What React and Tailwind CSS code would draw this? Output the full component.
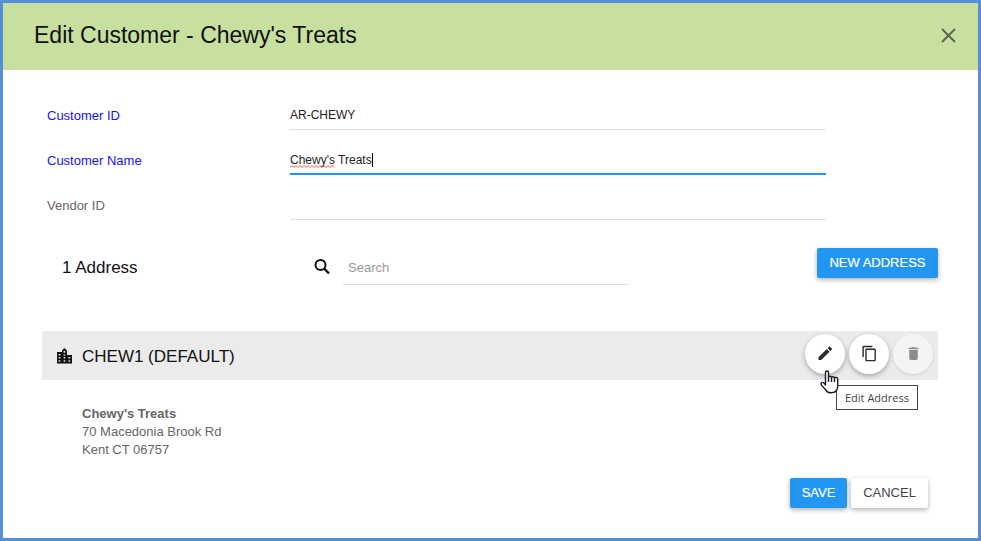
import React from "react";
import { MdContentCopy, MdDelete } from "react-icons/md";

const raised = "shadow-[0_2px_5px_rgba(0,0,0,0.3)]";

function Field({ id, label, value, required, focused }) {
  return (
    <div className="grid h-[45px] grid-cols-[243px_1fr] items-end">
      <label
        htmlFor={id}
        className={`text-[13px] leading-7 ${required ? "text-[#1414ee]" : "text-[#666666]"}`}
      >
        {label}
      </label>
      <div className="relative">
        <input
          id={id}
          type="text"
          defaultValue={value}
          spellCheck={false}
          className={`block h-[30px] w-full bg-transparent text-[12px] text-[#222222] outline-none ${
            focused ? "border-b-2 border-[#2196f3] pt-px" : "border-b border-[#dddddd]"
          }`}
        />
        {focused && (
          <>
            <svg className="absolute top-5 left-0 h-[3px] w-[45px]" viewBox="0 0 45 3" fill="none" aria-hidden="true">
              <path
                d="M0 2.5l2-2 2 2 2-2 2 2 2-2 2 2 2-2 2 2 2-2 2 2 2-2 2 2 2-2 2 2 2-2 2 2 2-2 2 2 2-2 2 2 2-2 2 2"
                stroke="#f04040"
                strokeWidth="0.9"
              />
            </svg>
            <span className="absolute top-2 left-[82px] h-[14px] w-px bg-black" />
          </>
        )}
      </div>
    </div>
  );
}

function RoundButton({ label, disabled, children }) {
  return (
    <button
      type="button"
      aria-label={label}
      disabled={disabled}
      className={`flex size-10 items-center justify-center rounded-full pb-0.5 ${
        disabled ? "bg-[#f4f4f4] text-[#8c8c8c] shadow-[0_1px_3px_rgba(0,0,0,0.12)]" : `bg-white text-[#2b2b2b] ${raised}`
      }`}
    >
      {children}
    </button>
  );
}

export default function App() {
  return (
    <div className="flex min-h-screen flex-col border-3 border-[#568fd6] bg-white font-['Liberation_Sans',Arial,sans-serif]">
      <header className="flex h-[67px] items-center justify-between bg-[#c7df9f] pr-5 pb-0.5 pl-[31px]">
        <h1 className="text-[23px] text-[#111111]">Edit Customer - Chewy's Treats</h1>
        <button type="button" aria-label="Close" className="text-[#5c6250]">
          <svg className="size-5" viewBox="0 0 20 20" fill="none" stroke="currentColor" strokeWidth="1.8" aria-hidden="true">
            <path d="M4 3l13 13M17 3l-13 13" />
          </svg>
        </button>
      </header>

      <main className="pt-[15px] pr-10 pl-[39px]">
        <form onSubmit={(event) => event.preventDefault()}>
          <div className="pr-28 pl-[5px]">
            <Field id="customer-id" label="Customer ID" value="AR-CHEWY" required />
            <Field id="customer-name" label="Customer Name" value="Chewy's Treats" required focused />
            <Field id="vendor-id" label="Vendor ID" value="" />
          </div>

          <div className="mt-7 flex items-center pl-5">
            <h2 className="w-[252px] pt-0.5 text-[17px] text-[#111111]">1 Address</h2>
            <label htmlFor="address-search" aria-label="Search addresses" className="w-[29px]">
              <svg className="size-4" viewBox="0 0 16 16" fill="none" stroke="#111111" strokeWidth="2" aria-hidden="true">
                <circle cx="6.5" cy="6" r="5" />
                <path d="M10.200 9.700l4.800 4.800" strokeWidth="2.400" />
              </svg>
            </label>
            <input
              id="address-search"
              type="text"
              placeholder="Search"
              className="h-[37px] w-[286px] border-b border-[#dddddd] px-[5px] pt-0.5 text-[13px] outline-none placeholder:text-[#999999]"
            />
            <button
              type="button"
              className={`ml-auto h-[30px] w-[121px] self-start rounded-xs bg-[#2196f3] text-[13px] text-white [-webkit-text-stroke:0.2px_white] ${raised}`}
            >
              NEW ADDRESS
            </button>
          </div>

          <section className="mt-[46px]">
            <div className="flex h-[49px] items-center bg-[#ebebeb] pr-[5px] pl-3.5">
              <svg className="size-[18px]" viewBox="0 0 18 18" fill="none" aria-hidden="true">
                <path d="M1 5h5V3.500L8.500 1 11 3.500V8h5v8.500H1z" fill="#111111" />
                <path
                  d="M7.600 4h1.800v1.800H7.600zM2.600 7h1.800v1.400H2.600zM7.600 7.400h1.800v1.400H7.600zM2.600 10h1.800v1.600H2.600zM7.600 10h1.800v1.600H7.600zM12.400 10h1.800v1.600h-1.800zM2.600 13.200h1.800v1.600H2.600zM7.600 13.200h1.800v1.600H7.600zM12.400 13.200h1.800v1.600h-1.800z"
                  fill="#d8d8d8"
                />
              </svg>
              <h3 className="ml-2 pt-0.5 text-[17px] text-[#111111]">CHEW1 (DEFAULT)</h3>
              <div className="ml-auto flex gap-1 pb-[3px]">
                <div className="relative">
                  <RoundButton label="Edit Address">
                    <svg className="size-4" viewBox="0 0 16 16" fill="currentColor" aria-hidden="true">
                      <path d="M1.500 12.300L9.800 4l2.700 2.700-8.300 8.300H1.500zM10.600 3.200l1.500-1.500q.5-.5 1 0l1.700 1.700q.5.500 0 1l-1.500 1.500z" />
                    </svg>
                  </RoundButton>
                  <svg
                    className="absolute top-9 left-[15px] z-10 h-[25px] w-[19px]"
                    viewBox="0 0 19 25"
                    fill="white"
                    stroke="#1c1c24"
                    strokeWidth="1.4"
                    strokeLinejoin="round"
                    aria-hidden="true"
                  >
                    <path d="M5.500 12.500V2.600Q5.500 1 7 1t1.500 1.600V7.500q0-1.200 1.500-1.200t1.500 1.500q0-1 1.500-1t1.500 1.500q0-.900 1.600-.900t1.600 2.200v6.400q0 6.800-6.800 6.800-3.600 0-5.300-3L1.600 15.400q-1.100-2.100.2-2.800t2.400.6l1.300 1.800z" />
                    <path d="M8.500 7.500V12M11.500 7.800V12M14.500 8.300V12" />
                  </svg>
                  <div
                    role="tooltip"
                    className="absolute top-[51px] left-[31px] h-[25px] w-[82px] border border-[#444444] bg-white text-center font-['Open_Sans','Noto_Sans',sans-serif] text-[11px] leading-[23px] whitespace-nowrap text-[#444444]"
                  >
                    Edit Address
                  </div>
                </div>
                <RoundButton label="Copy Address">
                  <MdContentCopy className="size-[17px]" />
                </RoundButton>
                <RoundButton label="Delete Address" disabled>
                  <MdDelete className="size-[17px]" />
                </RoundButton>
              </div>
            </div>
            <address className="mt-[25px] pl-10 text-[13px] leading-[18px] text-[#666666] not-italic">
              <strong className="block">Chewy's Treats</strong>
              70 Macedonia Brook Rd
              <br />
              Kent CT 06757
            </address>
          </section>

          <div className="mt-[19px] flex justify-end gap-1 pr-2.5">
            <button
              type="submit"
              className={`h-[30px] w-[57px] rounded-xs bg-[#2196f3] text-[13px] text-white [-webkit-text-stroke:0.2px_white] ${raised}`}
            >
              SAVE
            </button>
            <button
              type="button"
              className={`h-[30px] w-[77px] rounded-xs bg-white text-[13px] text-[#444444] ${raised}`}
            >
              CANCEL
            </button>
          </div>
        </form>
      </main>
    </div>
  );
}
